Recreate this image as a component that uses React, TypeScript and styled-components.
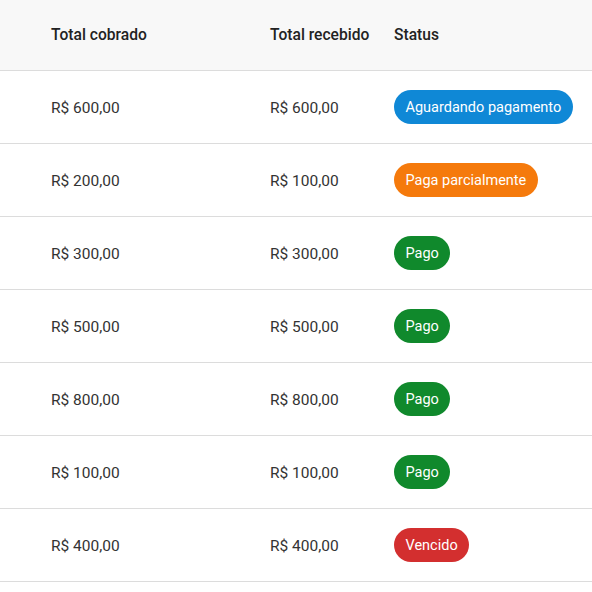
import React from "react";
import styled, { createGlobalStyle } from "styled-components";

const Global = createGlobalStyle`
  html, body { margin: 0; padding: 0; background: #ffffff; }
  body { font-family: Roboto, "Noto Sans", Arial, sans-serif; -webkit-font-smoothing: antialiased; }
`;

const Table = styled.div`
  width: 592px;
  display: flex;
  flex-direction: column;
`;

const Row = styled.div<{ $header?: boolean }>`
  display: grid;
  grid-template-columns: 219px 124px 1fr;
  align-items: center;
  padding-left: 51px;
  height: ${(p) => (p.$header ? "70px" : "72px")};
  background: ${(p) => (p.$header ? "#f8f8f8" : "#ffffff")};
  border-bottom: 1px solid #dcdcdc;
`;

const HeadCell = styled.div`
  font-size: 15.6px;
  font-weight: 500;
  color: #222222;
`;

const Cell = styled.div`
  font-size: 15.5px;
  font-weight: 400;
  color: #333333;
  padding-top: 1px;
`;

type Status = "aguardando" | "parcial" | "pago" | "vencido";

const colors: Record<Status, string> = {
  aguardando: "#0f88d6",
  parcial: "#f57a0c",
  pago: "#10892c",
  vencido: "#d32f2f",
};

const labels: Record<Status, string> = {
  aguardando: "Aguardando pagamento",
  parcial: "Paga parcialmente",
  pago: "Pago",
  vencido: "Vencido",
};

const Pill = styled.span<{ $status: Status }>`
  display: inline-flex;
  align-items: center;
  height: 34px;
  padding: 0 11.5px;
  border-radius: 17px;
  background: ${(p) => colors[p.$status]};
  color: #ffffff;
  font-size: 14.5px;
  font-weight: 400;
  white-space: nowrap;
`;

const StatusCell = styled.div`
  display: flex;
  align-items: center;
`;

const rows: { cobrado: string; recebido: string; status: Status }[] = [
  { cobrado: "R$ 600,00", recebido: "R$ 600,00", status: "aguardando" },
  { cobrado: "R$ 200,00", recebido: "R$ 100,00", status: "parcial" },
  { cobrado: "R$ 300,00", recebido: "R$ 300,00", status: "pago" },
  { cobrado: "R$ 500,00", recebido: "R$ 500,00", status: "pago" },
  { cobrado: "R$ 800,00", recebido: "R$ 800,00", status: "pago" },
  { cobrado: "R$ 100,00", recebido: "R$ 100,00", status: "pago" },
  { cobrado: "R$ 400,00", recebido: "R$ 400,00", status: "vencido" },
];

export default function App() {
  return (
    <>
      <Global />
      <Table>
        <Row $header>
          <HeadCell>Total cobrado</HeadCell>
          <HeadCell>Total recebido</HeadCell>
          <HeadCell>Status</HeadCell>
        </Row>
        {rows.map((r, i) => (
          <Row key={i}>
            <Cell>{r.cobrado}</Cell>
            <Cell>{r.recebido}</Cell>
            <StatusCell>
              <Pill $status={r.status}>{labels[r.status]}</Pill>
            </StatusCell>
          </Row>
        ))}
      </Table>
    </>
  );
}
